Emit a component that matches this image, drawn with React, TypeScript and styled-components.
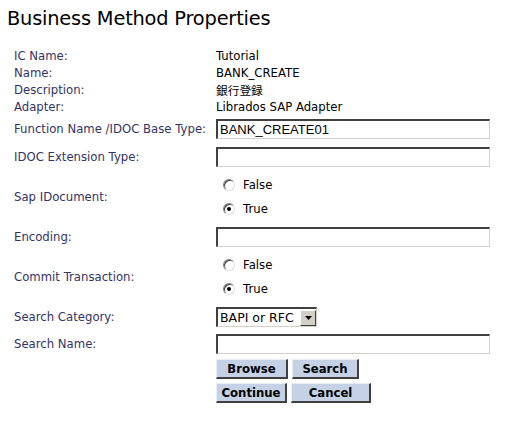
import React, { useState } from "react";
import styled, { createGlobalStyle } from "styled-components";

const GlobalStyle = createGlobalStyle`
  body {
    margin: 0;
    background: #ffffff;
    font-family: "DejaVu Sans", Verdana, sans-serif;
  }
`;

const Page = styled.div`
  width: 508px;
  height: 426px;
  padding: 7px 0 0 7px;
  box-sizing: border-box;
  overflow: hidden;
`;

const Title = styled.h1`
  margin: 0;
  height: 40px;
  font-family: "DejaVu Sans", Verdana, sans-serif;
  font-size: 19.4px;
  font-weight: normal;
  line-height: 24px;
  color: #000000;
  letter-spacing: -0.2px;
`;

const Grid = styled.div`
  display: grid;
  grid-template-columns: 202px 276px;
  margin-left: 7px;
`;

const Label = styled.div<{ $h: number }>`
  height: ${(p) => p.$h}px;
  display: flex;
  align-items: center;
  font-size: 11.7px;
  color: #333366;
  white-space: nowrap;
`;

const Value = styled.div<{ $h: number }>`
  height: ${(p) => p.$h}px;
  display: flex;
  align-items: center;
  font-size: 11.7px;
  color: #000000;
  white-space: nowrap;
  font-family: "DejaVu Sans", Verdana, "Noto Sans CJK JP", sans-serif;
`;

const Cell = styled.div<{ $h: number }>`
  height: ${(p) => p.$h}px;
  display: flex;
  flex-direction: column;
  justify-content: center;
`;

const TextInput = styled.input`
  width: 274px;
  height: 20px;
  box-sizing: border-box;
  margin: 0;
  padding: 1px 2px;
  border-style: solid;
  border-width: 2px 1px 1px 2px;
  border-color: #404040 #d4d0c8 #d4d0c8 #404040;
  font-family: "Liberation Sans", Arial, sans-serif;
  font-size: 13px;
  color: #000;
  background: #fff;
  outline: none;
`;

const RadioRow = styled.label`
  height: 24px;
  display: flex;
  align-items: center;
  gap: 8px;
  padding-left: 7px;
  font-size: 11.7px;
  color: #000;
  cursor: pointer;
`;

const Radio = styled.span<{ $on: boolean }>`
  position: relative;
  width: 12px;
  height: 12px;
  box-sizing: border-box;
  border-radius: 50%;
  border: 1px solid;
  border-color: #808080 #e0e0e0 #e0e0e0 #808080;
  box-shadow: inset 1px 1px 0 #404040;
  background: #fff;
  &::after {
    content: "";
    display: ${(p) => (p.$on ? "block" : "none")};
    position: absolute;
    left: 3px;
    top: 3px;
    width: 4px;
    height: 4px;
    border-radius: 50%;
    background: #000;
  }
`;

const Select = styled.div`
  width: 101px;
  height: 20px;
  box-sizing: border-box;
  display: flex;
  align-items: center;
  border-style: solid;
  border-width: 2px 1px 1px 2px;
  border-color: #404040 #d4d0c8 #d4d0c8 #404040;
  background: #fff;
  font-size: 12.5px;
  color: #000;
`;

const SelectText = styled.span`
  flex: 1;
  padding-left: 2px;
  white-space: nowrap;
  overflow: hidden;
`;

const SelectArrow = styled.span`
  width: 16px;
  height: 16px;
  flex: none;
  box-sizing: border-box;
  display: flex;
  align-items: center;
  justify-content: center;
  background: #d4d0c8;
  border-style: solid;
  border-width: 1px;
  border-color: #ffffff #404040 #404040 #ffffff;
`;

const ButtonRow = styled.div`
  height: 24px;
  display: flex;
  align-items: center;
  gap: 4px;
`;

const Button = styled.button<{ $w: number }>`
  width: ${(p) => p.$w}px;
  height: 20px;
  margin: 0;
  padding: 0;
  box-sizing: border-box;
  background: #c5d2e6;
  border-style: solid;
  border-width: 1px 2px 2px 1px;
  border-color: #e8eef6 #404040 #404040 #e8eef6;
  font-family: "DejaVu Sans", Verdana, sans-serif;
  font-size: 11.7px;
  font-weight: bold;
  color: #000;
  cursor: pointer;
`;

function RadioPair({ value, onChange }: { value: boolean; onChange: (v: boolean) => void }) {
  return (
    <Cell $h={52}>
      <RadioRow onClick={() => onChange(false)}>
        <Radio $on={!value} />
        False
      </RadioRow>
      <RadioRow onClick={() => onChange(true)}>
        <Radio $on={value} />
        True
      </RadioRow>
    </Cell>
  );
}

export default function App() {
  const [sapDoc, setSapDoc] = useState(true);
  const [commit, setCommit] = useState(true);

  return (
    <Page>
      <GlobalStyle />
      <Title>Business Method Properties</Title>
      <Grid>
        <Label $h={17}>IC Name:</Label>
        <Value $h={17}>Tutorial</Value>
        <Label $h={17}>Name:</Label>
        <Value $h={17}>BANK_CREATE</Value>
        <Label $h={17}>Description:</Label>
        <Value $h={17}>銀行登録</Value>
        <Label $h={17}>Adapter:</Label>
        <Value $h={17}>Librados SAP Adapter</Value>

        <Label $h={28}>Function Name /IDOC Base Type:</Label>
        <Cell $h={28}>
          <TextInput defaultValue="BANK_CREATE01" />
        </Cell>
        <Label $h={28}>IDOC Extension Type:</Label>
        <Cell $h={28}>
          <TextInput />
        </Cell>

        <Label $h={52}>Sap IDocument:</Label>
        <RadioPair value={sapDoc} onChange={setSapDoc} />

        <Label $h={28}>Encoding:</Label>
        <Cell $h={28}>
          <TextInput />
        </Cell>

        <Label $h={52}>Commit Transaction:</Label>
        <RadioPair value={commit} onChange={setCommit} />

        <Label $h={28}>Search Category:</Label>
        <Cell $h={28}>
          <Select>
            <SelectText>BAPI or RFC</SelectText>
            <SelectArrow>
              <svg width="7" height="4" viewBox="0 0 7 4">
                <path d="M0 0h7L3.5 4z" fill="#000" />
              </svg>
            </SelectArrow>
          </Select>
        </Cell>
        <Label $h={26}>Search Name:</Label>
        <Cell $h={26}>
          <TextInput />
        </Cell>

        <div />
        <ButtonRow>
          <Button $w={72}>Browse</Button>
          <Button $w={67}>Search</Button>
        </ButtonRow>
        <div />
        <ButtonRow>
          <Button $w={71}>Continue</Button>
          <Button $w={80}>Cancel</Button>
        </ButtonRow>
      </Grid>
    </Page>
  );
}
